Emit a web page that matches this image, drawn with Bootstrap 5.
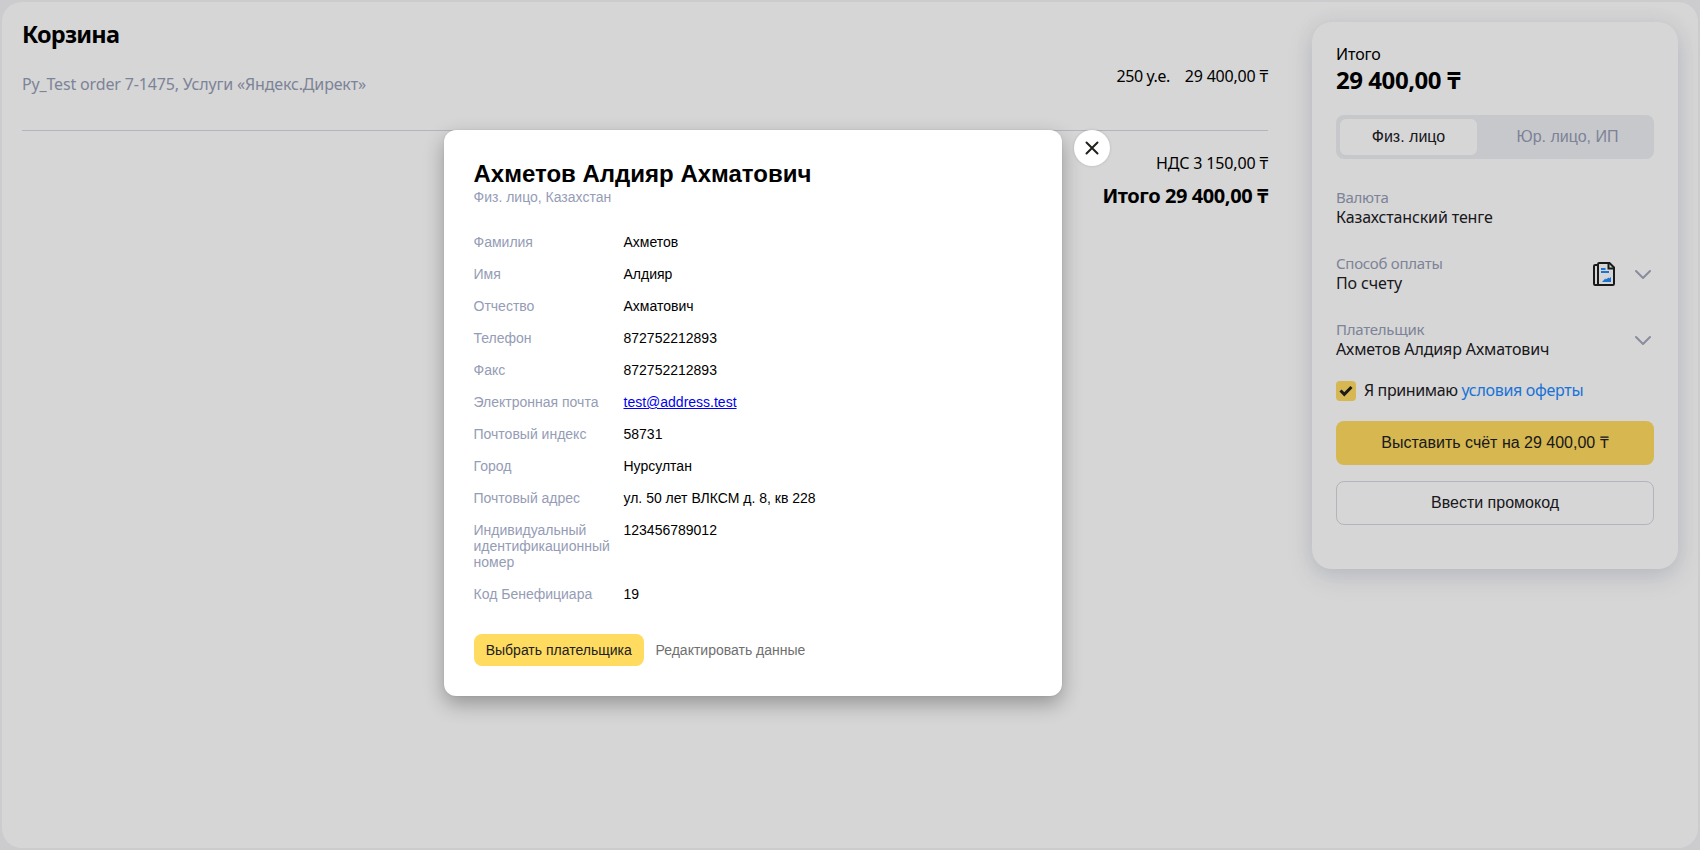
<!DOCTYPE html>
<html lang="ru">
<head>
<meta charset="utf-8">
<meta name="viewport" content="width=device-width, initial-scale=1">
<title>Корзина</title>
<link href="https://cdn.jsdelivr.net/npm/bootstrap@5.3.0/dist/css/bootstrap.min.css" rel="stylesheet">
<style>
html, body { height: 100%; }
body { font-family: "Noto Sans", sans-serif; font-size: 16px; line-height: 20px; color: #000; background: #f3f4f7; overflow: hidden; }
.page-panel { height: calc(100vh - 4px); margin: 2px; border-radius: 20px; background: #fff; padding: 20px; }
.muted-text { color: #959cb5; }

/* cart */
.cart-area { width: 1246px; }
.cart-title { font-size: 23.5px; line-height: 24px; font-weight: 700; letter-spacing: -.8px; margin: 0; }
.order-line { height: 85px; border-bottom: 1px solid #d6d7e2; }
.order-name { padding-top: 28px; letter-spacing: -.16px; }
.order-sums { padding-top: 20px; }
.order-qty { letter-spacing: -.4px; margin-right: 15px; }
.order-price { letter-spacing: -.2px; }
.vat-line { margin-top: 22px; letter-spacing: -.15px; }
.grand-total { font-size: 20px; line-height: 24px; font-weight: 700; letter-spacing: -.42px; margin-top: 11px; }

/* summary card */
.summary-card { width: 366px; height: 547px; border-radius: 20px; padding: 22px 24px; background: #fff; color: #21201f; box-shadow: 0 8px 24px rgba(80,90,130,.18), 0 0 20px rgba(80,90,130,.06); }
.sum-label, .sum-total { color: #000; }
.sum-label { letter-spacing: -.1px; }
.sum-total { font-size: 24px; line-height: 30px; font-weight: 700; letter-spacing: -.45px; margin-top: 1px; }
.segmented { height: 44px; padding: 4px; margin: 19px 0 28px; border-radius: 8px; background: #eeeff4; font-family: "Liberation Sans", sans-serif; }
.sum-total + .segmented { margin-top: 20px; }
.seg-on { width: 137px; border-radius: 6px; background: #fff; }
.seg-off { padding-left: 8px; color: #959cb5; }
.field-row { height: 40px; margin-bottom: 26px; }
.field-row.last-field { margin-bottom: 21px; }
.field-label { font-size: 15px; letter-spacing: -.26px; color: #959cb5; }
.field-value { letter-spacing: -.12px; }
.field-icons { gap: 18px; padding: 3px 2px 0 0; }
.doc-icon { margin-top: -2px; }
.check-box { width: 20px; height: 20px; margin: 1px 8px 0 0; border-radius: 4px; background: #ffdb62; }
.accept-row { height: 21px; letter-spacing: -.38px; }
.accept-row a { color: #2289ff; letter-spacing: -.3px; }
.btn-wide, .btn-wide:hover { height: 44px; border-radius: 8px; padding: 0; border: 0; font-family: "Liberation Sans", sans-serif; font-size: 16px; line-height: 20px; color: #21201f; }
.yellow, .yellow:hover { background: #ffdb60; color: #21201f; }
.btn-wide.outlined { border: 1px solid #d6d7e2; }

/* payer dialog over the dimmed page */
.veil { background: rgba(0,0,0,.16); z-index: 10; }
.payer-dialog { left: 444px; top: 130px; z-index: 20; font-family: "Liberation Sans", sans-serif; font-size: 14px; line-height: 16px; }
.payer-body { width: 618px; height: 566px; border-radius: 12px; padding: 30px 30px 30px 29.5px; background: #fff; box-shadow: 0 8px 20px rgba(0,0,0,.3), 0 0 2px rgba(0,0,0,.1); }
.payer-name { font-size: 24px; line-height: 28px; font-weight: 700; margin: 0 0 1px; }
.payer-fields { margin: 29px 0 32px; gap: 16px; }
.payer-fields dt { width: 150px; flex: none; font-weight: 400; color: #959cb5; padding-right: 10px; }
.payer-fields dd { margin: 0; }
.payer-fields a { color: #00e; }
.btn-pick { width: 170.500px; height: 32px; border-radius: 8px; padding: 0; border: 0; font-size: 14px; line-height: 16px; }
.btn-edit { color: #6f6f6f; font-size: 14px; line-height: 16px; padding: 0; border: 0; margin-left: 11.500px; }
.close-round { width: 36px; height: 36px; border-radius: 50%; background: #fff; margin-left: 12px; box-shadow: 0 0 3px rgba(0,0,0,.15); }
</style>
</head>
<body>
<main class="page-panel d-flex justify-content-between align-items-start">
  <section class="cart-area">
    <h1 class="cart-title">Корзина</h1>
    <div class="order-line d-flex justify-content-between">
      <span class="order-name muted-text">Py_Test order 7-1475, Услуги «Яндекс.Директ»</span>
      <div class="order-sums d-flex"><span class="order-qty">250 у.е.</span><span class="order-price">29 400,00 ₸</span></div>
    </div>
    <div class="vat-line text-end">НДС 3 150,00 ₸</div>
    <div class="grand-total text-end">Итого 29 400,00 ₸</div>
  </section>

  <aside class="summary-card">
    <div class="sum-label">Итого</div>
    <div class="sum-total">29 400,00 ₸</div>
    <div class="segmented d-flex">
      <div class="seg-on d-flex align-items-center justify-content-center">Физ. лицо</div>
      <div class="seg-off flex-fill d-flex align-items-center justify-content-center">Юр. лицо, ИП</div>
    </div>
    <div class="field-row">
      <div class="field-label">Валюта</div>
      <div class="field-value">Казахстанский тенге</div>
    </div>
    <div class="field-row d-flex justify-content-between">
      <div>
        <div class="field-label">Способ оплаты</div>
        <div class="field-value">По счету</div>
      </div>
      <div class="field-icons d-flex align-items-center">
        <svg class="doc-icon" width="24" height="26" viewBox="0 0 24 26" fill="none" stroke="#21201f" stroke-width="2">
          <path d="M6 24V3.200Q6 2 7.200 2H17.500L22 6.500V22.800Q22 24 20.800 24H3.200Q2 24 2 22.800V5.200Q2 4 3.200 4H6"/>
          <path d="M16.500 2V7.500H22"/>
          <path d="M9 8H13.500M9 11H17" stroke="#2289ff"/>
          <path d="M10 21L13.500 17.200V18.500L17 16.500V17.500L19 16V21H10Z" fill="#2289ff" stroke="none"/>
        </svg>
        <svg width="18" height="12" viewBox="0 0 18 12" fill="none" stroke="#a2a8bc" stroke-width="2" stroke-linecap="round" stroke-linejoin="round"><path d="M2 2L9 9L16 2"/></svg>
      </div>
    </div>
    <div class="field-row last-field d-flex justify-content-between">
      <div>
        <div class="field-label">Плательщик</div>
        <div class="field-value">Ахметов Алдияр Ахматович</div>
      </div>
      <div class="field-icons d-flex align-items-center">
        <svg width="18" height="12" viewBox="0 0 18 12" fill="none" stroke="#a2a8bc" stroke-width="2" stroke-linecap="round" stroke-linejoin="round"><path d="M2 2L9 9L16 2"/></svg>
      </div>
    </div>
    <div class="accept-row d-flex">
      <span class="check-box d-flex align-items-center justify-content-center"><svg width="14" height="12" viewBox="0 0 14 12" fill="none" stroke="#21201f" stroke-width="3"><path d="M1.500 5.500L5.300 9.300L12.500 2"/></svg></span>
      <span>Я принимаю <a href="#" class="text-decoration-none">условия оферты</a></span>
    </div>
    <button class="btn btn-wide yellow w-100 d-block" style="margin-top:20px">Выставить счёт на 29 400,00 ₸</button>
    <button class="btn btn-wide outlined w-100 d-block mt-3">Ввести промокод</button>
  </aside>
</main>

<div class="veil position-absolute top-0 start-0 w-100 h-100"></div>

<div class="payer-dialog position-absolute d-flex align-items-start" role="dialog">
  <div class="payer-body">
    <h2 class="payer-name">Ахметов Алдияр Ахматович</h2>
    <div class="muted-text">Физ. лицо, Казахстан</div>
    <dl class="payer-fields d-flex flex-column">
      <div class="d-flex"><dt>Фамилия</dt><dd>Ахметов</dd></div>
      <div class="d-flex"><dt>Имя</dt><dd>Алдияр</dd></div>
      <div class="d-flex"><dt>Отчество</dt><dd>Ахматович</dd></div>
      <div class="d-flex"><dt>Телефон</dt><dd>872752212893</dd></div>
      <div class="d-flex"><dt>Факс</dt><dd>872752212893</dd></div>
      <div class="d-flex"><dt>Электронная почта</dt><dd><a href="#">test@address.test</a></dd></div>
      <div class="d-flex"><dt>Почтовый индекс</dt><dd>58731</dd></div>
      <div class="d-flex"><dt>Город</dt><dd>Нурсултан</dd></div>
      <div class="d-flex"><dt>Почтовый адрес</dt><dd>ул. 50 лет ВЛКСМ д. 8, кв 228</dd></div>
      <div class="d-flex"><dt>Индивидуальный идентификационный номер</dt><dd>123456789012</dd></div>
      <div class="d-flex"><dt>Код Бенефициара</dt><dd>19</dd></div>
    </dl>
    <div class="d-flex align-items-center">
      <button class="btn btn-pick yellow">Выбрать плательщика</button>
      <button class="btn btn-edit">Редактировать данные</button>
    </div>
  </div>
  <div class="close-round d-flex align-items-center justify-content-center">
    <svg width="14" height="14" viewBox="0 0 14 14" fill="none" stroke="#21201f" stroke-width="2" stroke-linecap="round"><path d="M1.500 1.500L12.500 12.500M12.500 1.500L1.500 12.500"/></svg>
  </div>
</div>
<script src="https://cdn.jsdelivr.net/npm/bootstrap@5.3.0/dist/js/bootstrap.bundle.min.js"></script>
</body>
</html>
